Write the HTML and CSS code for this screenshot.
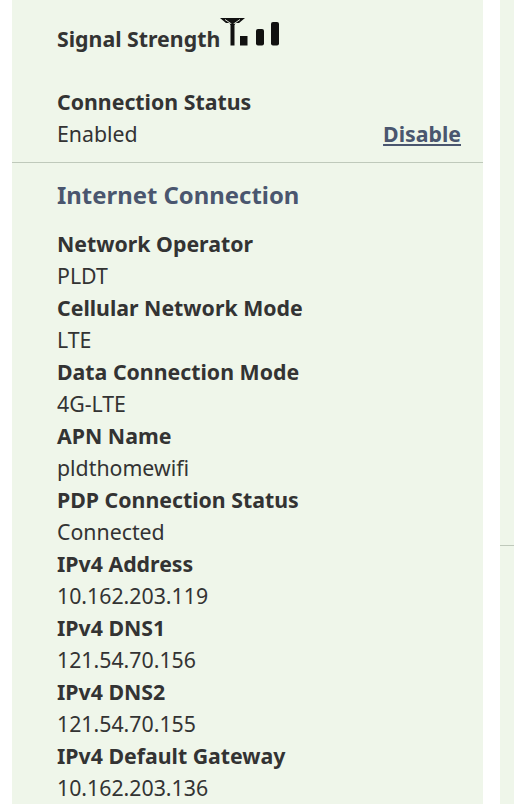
FILE: index.html
```html
<!DOCTYPE html>
<html lang="en">
<head>
<meta charset="utf-8">
<title>Internet Connection</title>
<link rel="stylesheet" href="styles.css">
</head>
<body>
<div class="page">
  <main class="panel">
    <section class="top">
      <div class="signal">
        <span class="label">Signal Strength</span>
        <svg class="signal-icon" width="60" height="28" viewBox="0 0 60 28" aria-hidden="true">
          <path d="M0 0H25L19 5H15.5L14.5 7H10.5L9.5 5H6Z" fill="#111"/>
          <path d="M5 1.5L11.5 6M20 1.5L13.5 6" stroke="#eff6ea" stroke-width="0.9" fill="none"/>
          <rect x="10.5" y="6" width="4" height="21.5" fill="#111"/>
          <rect x="20" y="18" width="7.5" height="9.5" fill="#111"/>
          <rect x="36" y="11" width="8" height="16.5" rx="2" fill="#111"/>
          <rect x="51" y="4" width="8" height="23.5" rx="2" fill="#111"/>
        </svg>
      </div>
      <div class="status">
        <div class="label">Connection Status</div>
        <div class="status-row"><span>Enabled</span><a class="action" href="#">Disable</a></div>
      </div>
    </section>
    <section class="details">
      <h2>Internet Connection</h2>
      <dl>
        <dt>Network Operator</dt><dd>PLDT</dd>
        <dt>Cellular Network Mode</dt><dd>LTE</dd>
        <dt>Data Connection Mode</dt><dd>4G-LTE</dd>
        <dt>APN Name</dt><dd>pldthomewifi</dd>
        <dt>PDP Connection Status</dt><dd>Connected</dd>
        <dt>IPv4 Address</dt><dd>10.162.203.119</dd>
        <dt>IPv4 DNS1</dt><dd>121.54.70.156</dd>
        <dt>IPv4 DNS2</dt><dd>121.54.70.155</dd>
        <dt>IPv4 Default Gateway</dt><dd>10.162.203.136</dd>
      </dl>
    </section>
  </main>
  <aside class="side"><div class="side-top"></div></aside>
</div>
</body>
</html>
```
FILE: styles.css
```css
html, body { margin: 0; padding: 0; background: #fff; }
body { font-family: "Noto Sans", "Open Sans", sans-serif; font-size: 21.3px; line-height: 32px; color: #333; height: 804px; overflow: hidden; }
.page { display: flex; height: 804px; padding-left: 12px; box-sizing: border-box; }
.panel { width: 471px; background: #eff6ea; flex: none; height: 804px; overflow: hidden; }
.top { padding: 16px 22px 12px 45px; border-bottom: 1px solid #bfc9bb; }
.signal { display: flex; align-items: flex-start; height: 54px; padding-top: 7px; box-sizing: border-box; }
.signal .label { line-height: 32px; }
.signal-icon { margin-top: -5px; flex: none; }
.label, dt { font-weight: 700; }
.status { margin-top: 16px; }
.status-row { display: flex; justify-content: space-between; }
.action { color: #4a566f; font-weight: 700; text-decoration: underline; }
.details { padding: 15px 22px 0 45px; }
h2 { margin: 0 0 16px; font-size: 23.9px; line-height: 34px; font-weight: 700; color: #4a566f; }
dl { margin: 0; }
dt, dd { margin: 0; height: 32px; }
.side { margin-left: 17px; flex: 1; background: #eff6ea; }
.side-top { height: 545px; border-bottom: 1px solid #bfc9bb; }
```
